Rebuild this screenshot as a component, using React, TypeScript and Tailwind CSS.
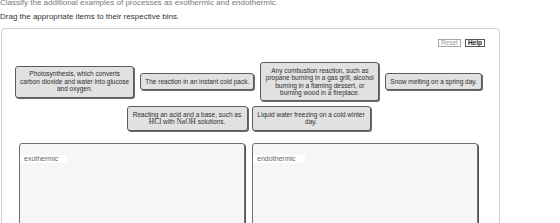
import React from "react";

const cardBase =
  "whitespace-nowrap rounded-[3px] border border-[#5c5c5c] bg-[#e1e1e1] px-[4px] py-[3.5px] text-center text-[6.5px] leading-[7.6px] text-[#2e2e2e] shadow-[1px_1px_0_#6a6a6a]";

const Card = ({ children, className = "" }: any) => (
  <div className={`${cardBase} ${className}`}>{children}</div>
);

const Bin = ({ label }: any) => (
  <div className="h-[90px] w-[226px] rounded-[3px] border border-[#6f6f6f] bg-[#f6f6f6] shadow-[1px_1px_0_#555]">
    <span className="ml-[1px] mt-[1px] inline-block bg-white pl-[3px] pr-[9px] text-[7px] leading-[8px] text-[#666]">
      {label}
    </span>
  </div>
);

const Chem = ({ children }: any) => (
  <span className="font-['Liberation_Serif',serif] text-[7.5px]">{children}</span>
);

export default function App() {
  return (
    <div className="h-[223px] w-[560px] overflow-hidden bg-white font-['Liberation_Sans',Arial,sans-serif]">
      <p className="-mt-[1px] text-[8px] leading-[8px] text-[#777]">
        Classify the additional examples of processes as exothermic and endothermic.
      </p>
      <p className="mt-[5px] text-[8px] leading-[9px] text-[#333]">
        Drag the appropriate items to their respective bins.
      </p>

      <div className="ml-[1px] mt-[7px] h-[220px] w-[499px] rounded-t-[4px] border border-[#cfcfcf]">
        {/* toolbar */}
        <div className="mr-[14px] mt-[10px] flex justify-end gap-[4px]">
          <button className="border border-[#a5a5a5] px-[2px] text-[6.5px] leading-[6px] text-[#999]">
            Reset
          </button>
          <button className="border border-[#555] px-[2px] text-[6.5px] font-bold leading-[6px] text-[#222]">
            Help
          </button>
        </div>

        {/* items */}
        <div className="mt-[15px] flex items-center justify-center gap-[6px] pr-[4px]">
          <Card className="min-w-[119px]">
            Photosynthesis, which converts
            <br />
            carbon dioxide and water into glucose
            <br />
            and oxygen.
          </Card>
          <Card>The reaction in an instant cold pack.</Card>
          <Card className="min-w-[119px]">
            Any combustion reaction, such as
            <br />
            propane burning in a gas grill, alcohol
            <br />
            burning in a flaming dessert, or
            <br />
            burning wood in a fireplace.
          </Card>
          <Card>Snow melting on a spring day.</Card>
        </div>
        <div className="mt-[5px] flex items-center justify-center gap-[4px] pr-[4px]">
          <Card className="min-w-[121px]">
            Reacting an acid and a base, such as
            <br />
            <Chem>HCl</Chem> with <Chem>NaOH</Chem> solutions.
          </Card>
          <Card className="min-w-[119px]">
            Liquid water freezing on a cold winter
            <br />
            day.
          </Card>
        </div>

        {/* bins */}
        <div className="mt-[12px] flex gap-[7px] pl-[17px]">
          <Bin label="exothermic" />
          <Bin label="endothermic" />
        </div>
      </div>
    </div>
  );
}
